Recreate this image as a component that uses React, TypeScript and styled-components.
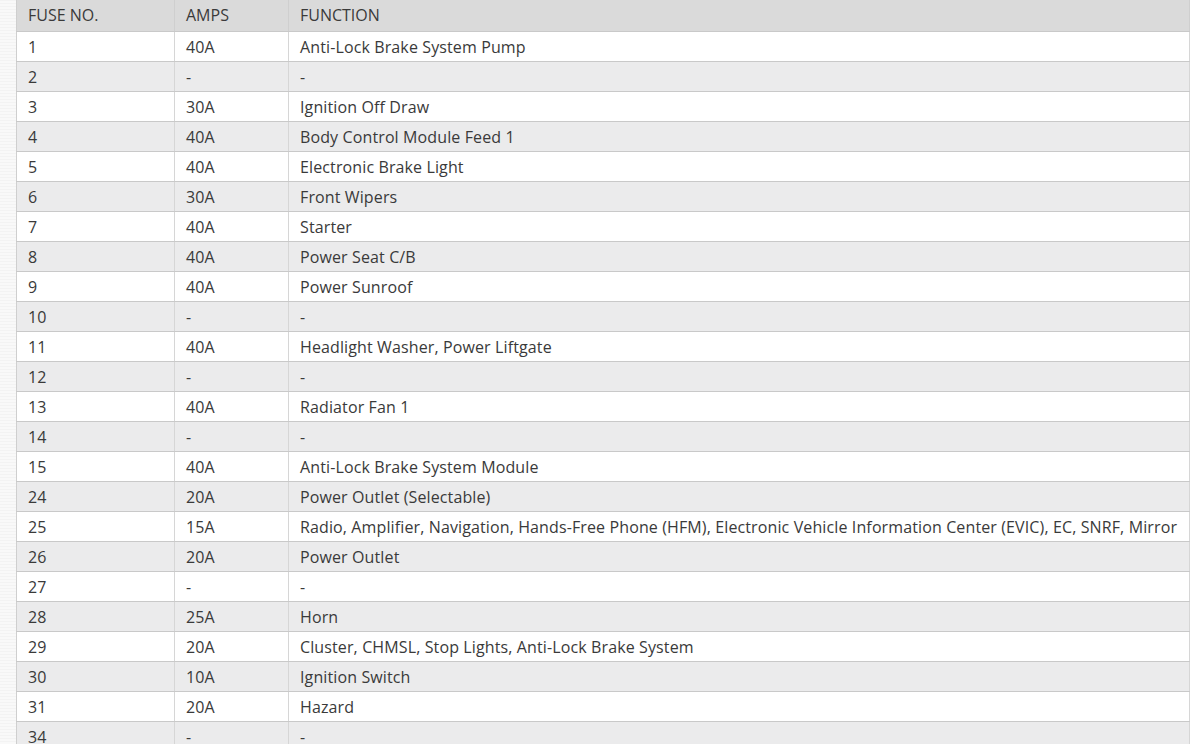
import styled, { createGlobalStyle } from "styled-components"

const GlobalStyle = createGlobalStyle`
    html, body {
        margin: 0;
        padding: 0;
        background: #f7f7f7;
        overflow: hidden;
    }
`

const Page = styled.div`
    display: flex;
    width: 1190px;
    height: 744px;
    overflow: hidden;
    background-color: #f7f7f7;
`

const Gutter = styled.div`
    flex: 0 0 16px;
    background: repeating-linear-gradient(0deg, #f9f9f9 0 2px, #f3f3f3 2px 3px);
`

const Table = styled.table`
    flex: 0 0 1174px;
    width: 1174px;
    border-collapse: collapse;
    table-layout: fixed;
    font-family: "Open Sans", Lato, sans-serif;
    font-size: 16px;
    letter-spacing: 0.12px;
    color: #3a3a3a;
    border-left: 1px solid #cfcfcf;
    align-self: flex-start;
`

const HeadCell = styled.th<{ $w?: number }>`
    box-sizing: border-box;
    width: ${p => (p.$w ? `${p.$w}px` : "auto")};
    height: 31px;
    padding: 0 12px 1px 11px;
    text-align: left;
    font-weight: 400;
    letter-spacing: 0;
    background-color: #dadada;
    border-right: 1px solid #cfcfcf;
    border-bottom: 1px solid #c9c9c9;
    white-space: nowrap;
`

const Row = styled.tr<{ $alt: boolean }>`
    background-color: ${p => (p.$alt ? "#ebebec" : "#ffffff")};
`

const Cell = styled.td`
    box-sizing: border-box;
    height: 30px;
    padding: 1px 12px 0 11px;
    border-right: 1px solid #d6d6d6;
    border-bottom: 1px solid #c9c9c9;
    white-space: nowrap;
    overflow: hidden;
`

const fuses: [string, string, string][] = [
    ["1", "40A", "Anti-Lock Brake System Pump"],
    ["2", "-", "-"],
    ["3", "30A", "Ignition Off Draw"],
    ["4", "40A", "Body Control Module Feed 1"],
    ["5", "40A", "Electronic Brake Light"],
    ["6", "30A", "Front Wipers"],
    ["7", "40A", "Starter"],
    ["8", "40A", "Power Seat C/B"],
    ["9", "40A", "Power Sunroof"],
    ["10", "-", "-"],
    ["11", "40A", "Headlight Washer, Power Liftgate"],
    ["12", "-", "-"],
    ["13", "40A", "Radiator Fan 1"],
    ["14", "-", "-"],
    ["15", "40A", "Anti-Lock Brake System Module"],
    ["24", "20A", "Power Outlet (Selectable)"],
    ["25", "15A", "Radio, Amplifier, Navigation, Hands-Free Phone (HFM), Electronic Vehicle Information Center (EVIC), EC, SNRF, Mirror"],
    ["26", "20A", "Power Outlet"],
    ["27", "-", "-"],
    ["28", "25A", "Horn"],
    ["29", "20A", "Cluster, CHMSL, Stop Lights, Anti-Lock Brake System"],
    ["30", "10A", "Ignition Switch"],
    ["31", "20A", "Hazard"],
    ["34", "-", "-"],
]

export default function App() {
    return (
        <>
            <GlobalStyle />
            <Page>
                <Gutter />
                <Table>
                    <thead>
                        <tr>
                            <HeadCell $w={158}>FUSE NO.</HeadCell>
                            <HeadCell $w={114}>AMPS</HeadCell>
                            <HeadCell>FUNCTION</HeadCell>
                        </tr>
                    </thead>
                    <tbody>
                        {fuses.map(([no, amps, fn], i) => (
                            <Row key={no} $alt={i % 2 === 1}>
                                <Cell>{no}</Cell>
                                <Cell>{amps}</Cell>
                                <Cell>{fn}</Cell>
                            </Row>
                        ))}
                    </tbody>
                </Table>
            </Page>
        </>
    )
}
